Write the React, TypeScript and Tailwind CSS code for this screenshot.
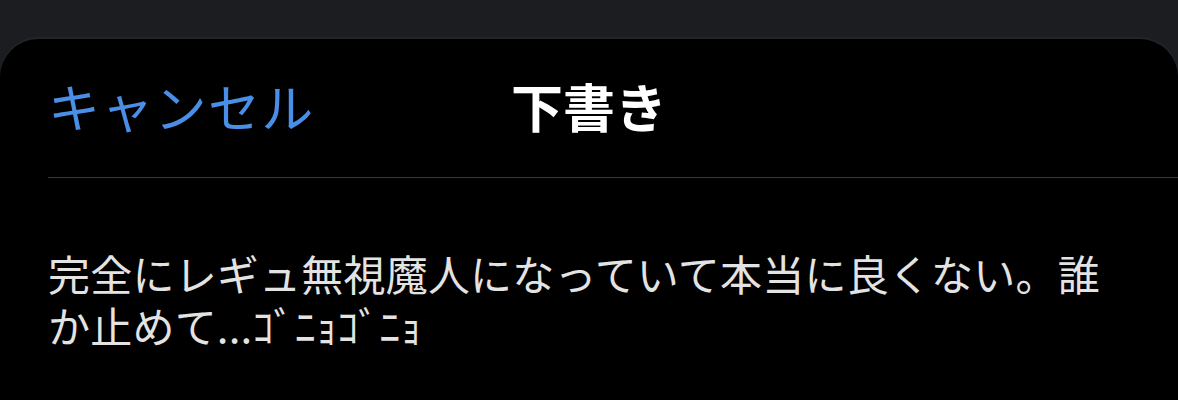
import React from 'react';

const font = { fontFamily: '"Noto Sans CJK JP", "Noto Sans", sans-serif' };

const DraftSheet: React.FC = () => {
  return (
    <div className="min-h-screen bg-[#1c1d21] pt-[39px]" style={font}>
      {/* Sheet */}
      <div className="h-[361px] bg-black rounded-t-[38px] shadow-[0_-2px_0_#23242a]">
        {/* Header */}
        <div className="ml-[48px] h-[139px] grid grid-cols-[1fr_auto_1fr] items-center border-b border-[#38383a]">
          <button className="justify-self-start text-[52px] leading-none text-[#4a8fe7] tracking-[0.025em] pb-[4px]">
            キャンセル
          </button>
          <h1 className="-ml-[48px] text-[52px] leading-none font-bold text-white pb-[4px]">
            下書き
          </h1>
          <div />
        </div>

        {/* Body */}
        <div className="pl-[48px] pr-[48px] pt-[69px]">
          <p className="text-[42px] leading-[52px] tracking-[0.005em] text-[#e3e3e3]">
            完全にレギュ無視魔人になっていて本当に良くない。誰か止めて...ｺﾞﾆｮｺﾞﾆｮ
          </p>
        </div>
      </div>
    </div>
  );
};

export default function App() {
  return <DraftSheet />;
}
